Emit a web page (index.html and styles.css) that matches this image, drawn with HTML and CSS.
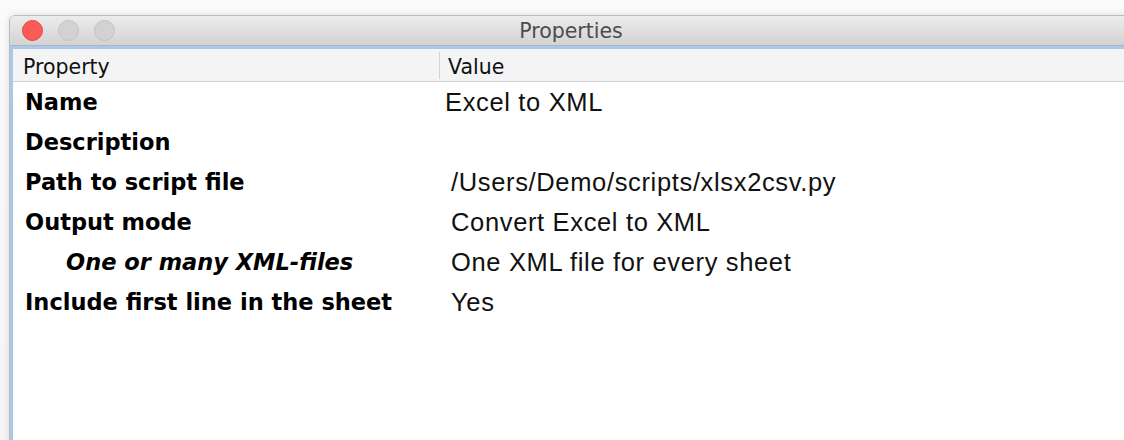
FILE: index.html
```html
<!DOCTYPE html>
<html lang="en">
<head>
<meta charset="utf-8">
<title>Properties</title>
<link rel="stylesheet" href="styles.css">
</head>
<body>
<div class="desk">
  <div class="window">
    <div class="titlebar">
      <div class="lights">
        <span class="light close"></span>
        <span class="light"></span>
        <span class="light"></span>
      </div>
      <div class="title">Properties</div>
      <div></div>
    </div>
    <div class="content">
      <div class="table-head">
        <div class="th">Property</div>
        <div class="th th-value">Value</div>
      </div>
      <div class="rows">
        <div class="row">
          <div class="label">Name</div>
          <div class="value value-edit">Excel to XML</div>
        </div>
        <div class="row">
          <div class="label">Description</div>
          <div class="value"></div>
        </div>
        <div class="row">
          <div class="label">Path to script file</div>
          <div class="value">/Users/Demo/scripts/xlsx2csv.py</div>
        </div>
        <div class="row">
          <div class="label">Output mode</div>
          <div class="value">Convert Excel to XML</div>
        </div>
        <div class="row">
          <div class="label label-sub">One or many XML-files</div>
          <div class="value">One XML file for every sheet</div>
        </div>
        <div class="row">
          <div class="label">Include first line in the sheet</div>
          <div class="value">Yes</div>
        </div>
      </div>
    </div>
  </div>
</div>
</body>
</html>
```

FILE: styles.css
```css
html, body {
  margin: 0;
  height: 100%;
}

body {
  background: linear-gradient(to bottom, #fbfbfb 0, #f6f6f6 100%);
  overflow: hidden;
  font-family: "DejaVu Sans", "Liberation Sans", sans-serif;
}

.desk {
  padding: 15px 0 0 9px;
  height: 100%;
  box-sizing: border-box;
}

.window {
  width: 1122px;
  height: 100%;
  border: 1px solid #bdbdbd;
  border-bottom: none;
  border-radius: 6px 6px 0 0;
  box-shadow: 0 0 8px rgba(0, 0, 0, 0.12);
  display: flex;
  flex-direction: column;
  overflow: hidden;
}

/* title bar */
.titlebar {
  height: 29px;
  flex: none;
  display: grid;
  grid-template-columns: 1fr auto 1fr;
  align-items: center;
  background: linear-gradient(to bottom, #ececec 0, #e2e2e2 40%, #d3d3d3 100%);
  border-bottom: 1px solid #b4b4b4;
}

.lights {
  display: flex;
  gap: 15px;
  padding-left: 12px;
}

.light {
  width: 19px;
  height: 19px;
  border-radius: 50%;
  background: #d2d2d2;
  border: 1px solid #c2c2c2;
}

.light.close {
  background: #fc5b57;
  border-color: #e3443f;
}

.title {
  font-size: 20.5px;
  color: #4c4c4c;
  padding-top: 1px;
}

/* property table */
.content {
  flex: 1;
  background: #fff;
  border-top: 3px solid #a9c8ec;
  border-left: 3px solid #a9c8ec;
}

.table-head {
  display: grid;
  grid-template-columns: 426px 1fr;
  height: 32px;
  align-items: center;
  background: #f4f4f4;
  border-bottom: 1px solid #d2d2d2;
}

.th {
  font-size: 20.5px;
  color: #111;
  padding-left: 10px;
  padding-top: 3px;
  line-height: 24px;
}

.th-value {
  border-left: 1px solid #d3d3d3;
  padding-left: 8px;
}

.row {
  display: grid;
  grid-template-columns: 427px 1fr;
  height: 40px;
  align-items: center;
}

.label {
  font-weight: bold;
  font-size: 22.5px;
  color: #000;
  padding-left: 12px;
  white-space: nowrap;
}

.label-sub {
  font-style: italic;
  padding-left: 53px;
}

.value {
  font-family: "Liberation Sans", "DejaVu Sans", sans-serif;
  font-size: 25.5px;
  letter-spacing: 0.65px;
  color: #111;
  padding-left: 11px;
  white-space: nowrap;
}

.value-edit {
  padding-left: 5px;
}
```
